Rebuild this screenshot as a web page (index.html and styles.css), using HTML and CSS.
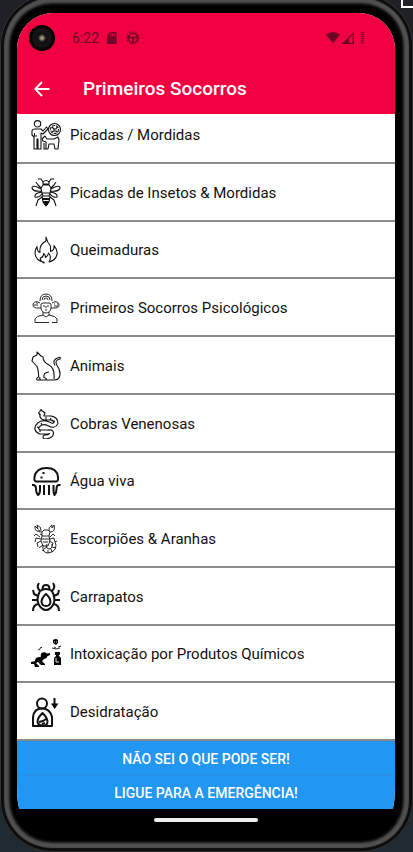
FILE: index.html
```html
<!DOCTYPE html>
<html lang="pt-BR">
<head>
<meta charset="utf-8">
<meta name="viewport" content="width=device-width, initial-scale=1">
<title>Primeiros Socorros</title>
<link rel="stylesheet" href="styles.css">
</head>
<body>
<div class="desktop-mark"></div>
<div class="phone">
  <div class="screen">
    <header class="header">
      <div class="status">
        <span class="camera"></span>
        <span class="clock">6:22</span>
        <svg class="sd" viewBox="0 0 10 12"><path d="M3 0h6.500v12H0V3z"/><path class="cut" d="M3.500 1.500v2.500M5.500 1.500v2.500M7.500 1.500v2.500"/></svg>
        <svg class="bug" viewBox="0 0 14 14"><circle cx="7" cy="7" r="4.700"/><circle class="teeth" cx="7" cy="7" r="6"/><path d="M2.500 6.500h9M7 6.500v5"/></svg>
        <span class="space"></span>
        <svg class="wifi" viewBox="0 0 14 12"><path d="M0 2.500Q7-2.500 14 2.500L7 11.500z"/></svg>
        <svg class="signal" viewBox="0 0 12 12"><path class="fill" d="M0 12 7 5v7z"/><path d="M1.500 11.300H11.300V1.500z"/><path class="hole" d="M7.500 6.500v4h2.500V4z"/></svg>
        <span class="battery"></span>
      </div>
      <div class="bar">
        <a class="back" href="#" aria-label="Voltar"><svg viewBox="0 0 16 16"><path d="M15.500 8H1.500M8 1 1.200 8 8 15"/></svg></a>
        <h1>Primeiros Socorros</h1>
      </div>
    </header>
    <ul class="list">
      <li><a href="#"><svg viewBox="0 0 30 30"><circle cx="6.500" cy="3.800" r="3.200"/><path d="M3 29V17L1 15V11Q1 9 4 9h6l2 2 3.500-4 1.500 2-5 5-2-1v16H7V19H6v10zM3.500 13v3H6"/><circle cx="23.500" cy="9.500" r="6"/><circle cx="23.500" cy="9.500" r="4" stroke-dasharray="3 1"/><path d="M21 7l2 2h2l1-2M21 12l2-1h2l1 1M23 9v2M11 19l3-3 2 3h7l4-2 1 3-1 9h-3l-1-5h-5l-1 5h-2v-7l-3-1zM13 23v6h2"/></svg><span>Picadas / Mordidas</span></a></li>
      <li><a href="#"><svg viewBox="0 0 30 30"><path d="M12 4Q15 1 18 4v2h-6zM12 7h6l2 3-1 5h-8l-1-5zM11 15l1 3h6l1-3M11 18l1 6 3 4 3-4 1-6"/><path d="M12 21h6M12 24h6M13 26h4" stroke-width="1.800"/><path d="M12 4 10 1H7M18 4l2-3h3M10 10 7 7 5 4M20 10l3-3 2-3M10 11Q1 6 1 10q1 4 10 3M20 11Q29 6 29 10q-1 4-10 3M11 14Q3 15 4 19q4 1 7-3M19 14Q27 15 26 19q-4 1-7-3M11 19 7 22 5 28M19 19l4 3 2 6"/></svg><span>Picadas de Insetos &amp; Mordidas</span></a></li>
      <li><a href="#"><svg viewBox="0 0 30 30"><path d="M13 27Q5 26 4 18.500q0-4 2-7 0 5 3 6-1-8 6-11.500V2q1 5 4.500 9v5.500q4-1 3.500-6 4 5 3 9-1.500 6-8 7.500 3-5-.5-9-.5 3-3 4.500 0-3-2-4 0 4-3 4.500-1 3 3.500 5z"/></svg><span>Queimaduras</span></a></li>
      <li><a href="#"><svg class="fine" viewBox="0 0 30 30"><path d="M4 29.500V26q1-3 8-4v-3M18 19v3q7 1 8 4v3.500M4 29.500h14M21 29.500h5M12 22l3 2 3-2M10 11v4q1 5 5 5t5-5v-4l-2-1h-6zM9 8q0-7 6-7t6 7M11 7q0-4 4-4t4 4M13 7q0-2 2-2t2 2M12 13h2M16 13h2M14 17h2M15 13v2"/><path d="M10 15H5q-4-1-3-4 2-4 7-1M20 15h5q4-1 3-4-2-4-7-1M3 12h4M23 11h1M26 11h1M23 13h4M5 10h2"/></svg><span>Primeiros Socorros Psicológicos</span></a></li>
      <li><a href="#"><svg viewBox="0 0 30 30"><path d="M10 29H6q-1-2 1.500-3 .5-6-1.500-10.500L1 10l1-4 4-2V1l4 4 2 1q0 5 6 8 6 3 5 14M10 29h5q1-2-2-2.500-1-5 5-5.500M10 29q-2-1-1-3M14 29h9q6 0 6-6 0-5-3-8.500-3-5.500 3-6.500 1-2-1-1.500-7.500 2-4 8"/></svg><span>Animais</span></a></li>
      <li><a href="#"><svg viewBox="0 0 30 30"><path class="snake" d="M11 5Q10 9 14 9H20Q25 10 25 14 23 18 18 15 12 12 8 15.500 3 20 9 23H17Q22 22 20 26 18 28 14 28"/><path class="snake-in" d="M11 5Q10 9 14 9H20Q25 10 25 14 23 18 18 15 12 12 8 15.500 3 20 9 23H17Q22 22 20 26 18 28 14 28"/><path class="head" d="M9.500 6 7.500 4 10 1l4 3-1 2.500"/><path d="M10 1V0M15 8v3M20 9l-1 2M24 12l-2 1M10 14l1 2M6 18l2 1M9 21v2"/></svg><span>Cobras Venenosas</span></a></li>
      <li><a href="#"><svg class="bold" viewBox="0 0 30 30"><path d="M5 15.500Q3 15.500 3.500 11 5 2 15.500 2T27 11q.5 4.500-2 4.500zM13 19v10M18 19v10M1 19h1q3 0 3 4 0 4 2 6 2-1 2-5V19M29.500 19H28q-2.500 0-2.500 4 0 4-2 6-1-2-1-5V19"/><path d="M12.500 6v2M9.500 11.500h2"/></svg><span>Água viva</span></a></li>
      <li><a href="#"><svg class="fine" viewBox="0 0 30 30"><path d="M11 8l2-2h4l2 2-1 4 1 5-2 5h-5l-2-5 1-5zM11 8Q3 8 4 2l3 3-1-4q5 2 4 6M19 8q6 0 4-7l-2 3V1q-4 2-3 6M9 13 5 10 3 12M10 15l-5-1-1 4M10 17l-4 2 1 4M12 21l-4 3M19 13l3-3 2 2M19 15l4-1 1 4M18 17l4 2-1 3M11 12h7M11 15h7M12 18h5M12 21q-1 8 5 8 8-1 8-8l-1-3 2-1M16 20q-2 5 3 5 3-1 2-5M13 25l3-2M17 29v-3M21 28l-1-3M25 24l-4-1M11 26l2 1M9 10l2 1M7 6l2 1"/></svg><span>Escorpiões &amp; Aranhas</span></a></li>
      <li><a href="#"><svg class="bold" viewBox="0 0 30 30"><path d="M11.500 7q0-4 3.500-4t3.500 4M9 9Q15 5 21 9q4 8 1.500 13-3 6-7.500 6t-7.500-6Q5 17 9 9zM15 12q-4.500 4-4.500 8 .5 4 4.500 4t4.500-4q0-4-4.500-8zM9 9Q5 5 8 1M21 9q4-4 1-8M7 14 3 12 2 8M23 14l4-2 1-4M6 18H1M24 18h5M7 22q-5 1-5 7M23 22q5 1 5 7"/></svg><span>Carrapatos</span></a></li>
      <li><a href="#"><svg class="fine" viewBox="0 0 30 30"><circle class="solid" cx="13" cy="16.500" r="3.200"/><path class="solid" d="M14 15l5-1v2l-4 2-2 2-2 2 3 3v1h-4l-3-3-2 1 3 3v1H4l-1-3H0v-2l4-1q0-4 5-4z"/><path class="solid" d="M24 13h5v3h-1v1l2 2v7h-7v-7l2-2v-1h-1z"/><path class="white" d="M25 19v4h3"/><path d="M7 11l2-1 1-2 1 1M21 9l4 1 4-1M25 9l-2-1M27 8l3-1"/><path class="solid" d="M22 1q3-2 5 0v3l-2 2-3-2z"/><path class="white" d="M23 3h1M25 3h1"/></svg><span>Intoxicação por Produtos Químicos</span></a></li>
      <li><a href="#"><svg class="bold" viewBox="0 0 30 30"><circle cx="11" cy="6.500" r="5"/><path d="M2 29V20q1-8.500 9-8.500T21 20v9zM11.500 16q-5 5-5 8.500t5 4 5-4Q16.500 21 11.500 16z"/><path d="M8 25l4-1 3-2M11 27l3-1M23.500 1v6"/><path class="solid" d="M20 6.500h7.500L23.700 12z"/></svg><span>Desidratação</span></a></li>
    </ul>
    <div class="actions">
      <button type="button">NÃO SEI O QUE PODE SER!</button>
      <button type="button">LIGUE PARA A EMERGÊNCIA!</button>
    </div>
  </div>
  <div class="nav"><span class="pill"></span></div>
</div>
</body>
</html>
```
FILE: styles.css
```css
* { box-sizing: border-box; }
html { overflow: hidden; }
body {
  display: flow-root;
  margin: 0;
  background: linear-gradient(#202127 0, #24272c 50%, #202b33 100%);
  font-family: Roboto, sans-serif;
  color: #111;
}
.desktop-mark {
  position: absolute;
  top: -8px;
  right: -4px;
  width: 16px;
  height: 16px;
  border: 2px solid #fff;
}
.phone {
  display: flex;
  flex-direction: column;
  height: calc(100vh + 6px);
  min-height: 600px;
  margin-top: -6px;
  padding: 19px 18px 0 17px;
  background: #000;
  border-radius: 52px;
  box-shadow:
    inset 0 0 0 1px #333,
    inset 0 0 1px 4px #0c0c0c,
    inset 0 0 2px 9px #505050,
    inset 0 0 2px 11px #151515;
}
.screen {
  flex: 1;
  display: flex;
  flex-direction: column;
  min-height: 0;
  overflow: hidden;
  background: #fff;
  border-radius: 36px 36px 3px 3px / 36px 36px 24px 24px;
}
.header {
  flex: none;
  height: 101px;
  background: #f00041;
}
.status {
  display: flex;
  align-items: center;
  height: 50px;
  padding: 0 31px 0 12px;
  color: #6c0725;
}
.camera {
  width: 26px;
  height: 26px;
  margin-right: 17px;
  border-radius: 50%;
  background: radial-gradient(circle, #c9b39a 0, #77695d 2px, #111 4px, #151515 9px, #000 11px);
}
.clock { font-size: 14px; margin-right: 8px; }
.sd { width: 10px; height: 12px; margin-right: 9px; fill: #6c0725; }
.cut { stroke: #f00041; stroke-width: 1; }
.bug { width: 14px; height: 14px; fill: none; stroke: #6c0725; stroke-width: 1.500; }
.teeth { stroke-dasharray: 1 2; }
.space { flex: 1; }
.wifi { width: 14px; height: 12px; margin-right: 2px; fill: #6c0725; }
.signal { width: 12px; height: 12px; margin-right: 7px; fill: none; stroke: #6c0725; stroke-width: 1.300; }
.signal .fill { fill: #6c0725; stroke: none; }
.signal .hole { fill: #f00041; stroke: none; }
.battery {
  width: 3px;
  height: 12px;
  background: repeating-linear-gradient(#8a0630 0, #8a0630 1px, #d2023b 1px, #d2023b 2px);
}
.bar {
  display: flex;
  align-items: center;
  height: 51px;
  padding-left: 17px;
}
.back { display: flex; margin-right: 33px; }
.back svg { width: 16px; height: 16px; fill: none; stroke: #fff; stroke-width: 1.800; }
h1 {
  margin: 0;
  font-size: 19px;
  line-height: 24px;
  font-weight: 500;
  color: #fff;
}
.list {
  flex: 1;
  display: grid;
  grid-template-rows: 50px repeat(10, minmax(0, 1fr));
  min-height: 0;
  margin: 0;
  padding: 0;
  list-style: none;
}
.list li {
  display: flex;
  align-items: flex-end;
  overflow: hidden;
  border-bottom: 2px solid #8b8b8b;
}
.list a {
  flex: 1;
  display: flex;
  align-items: center;
  gap: 9px;
  height: 54px;
  padding-left: 14px;
  color: inherit;
  font-size: 15px;
  line-height: 20px;
  text-decoration: none;
}
.list svg {
  flex: none;
  width: 30px;
  height: 30px;
  fill: none;
  stroke: #111;
  stroke-width: 1.100;
  stroke-linejoin: round;
}
.list .fine { stroke-width: 0.900; }
.list .bold { stroke-width: 2; }
.list .solid { fill: #000; stroke: none; }
.list .white { stroke: #fff; }
.list .snake { stroke-width: 5; stroke-linecap: round; }
.list .snake-in { stroke: #fff; stroke-width: 2.800; stroke-linecap: round; }
.list .head { fill: #fff; }
.actions { flex: none; }
.actions button {
  display: block;
  width: 100%;
  height: 34px;
  padding: 0;
  border: 0;
  border-top: 1px solid #2890e4;
  background: #2296f3;
  color: #fff;
  font: 500 14px/20px Roboto, sans-serif;
}
.nav {
  flex: none;
  display: flex;
  justify-content: center;
  height: 43px;
  padding-top: 9px;
}
.pill { width: 104px; height: 4px; border-radius: 2px; background: #eee; }
```
